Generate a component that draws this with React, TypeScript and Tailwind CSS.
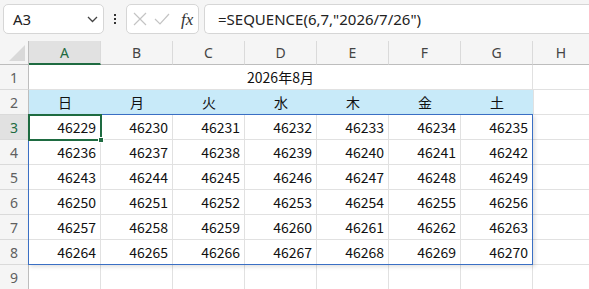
import React from 'react';

const days = ['日', '月', '火', '水', '木', '金', '土'];
const cols = ['A', 'B', 'C', 'D', 'E', 'F', 'G'];
const start = 46229;

const RowHead = ({ n, active }: { n: number; active?: boolean }) => (
  <div
    className={`w-[29px] shrink-0 flex items-center justify-center border-r border-r-[#bdbdbd] border-b border-b-[#dadada] font-['Noto_Sans',sans-serif] text-[14px] ${
      active ? 'bg-[#e1e1e1] text-[#1e6b41]' : 'bg-[#f5f5f5] text-[#5f5f5f]'
    }`}
  >
    {n}
  </div>
);

export default function App() {
  const rows = Array.from({ length: 6 }, (_, r) => Array.from({ length: 7 }, (_, c) => start + r * 7 + c));

  return (
    <div className="w-[589px] h-[289px] overflow-hidden bg-white font-['Noto_Sans','Noto_Sans_CJK_JP',sans-serif] text-black select-none">
      {/* formula bar */}
      <div className="h-[41px] bg-[#f5f5f5] flex items-start pt-[4px] pl-[3px]">
        <div className="w-[101px] h-[30px] bg-white border border-[#d6d6d6] rounded-[5px] flex items-center pl-[9px] pr-[5px]">
          <span className="text-[15px] text-[#222] flex-1">A3</span>
          <svg width="11" height="7" viewBox="0 0 11 7" className="mt-[1px]">
            <path d="M1 1l4.5 4.5L10 1" fill="none" stroke="#444" strokeWidth="1.3" />
          </svg>
        </div>
        <div className="w-[22px] h-[30px] flex flex-col items-center justify-center gap-[2px]">
          <span className="w-[2px] h-[2px] bg-[#333]" />
          <span className="w-[2px] h-[2px] bg-[#333]" />
          <span className="w-[2px] h-[2px] bg-[#333]" />
        </div>
        <div className="w-[73px] h-[30px] bg-white border border-[#d6d6d6] rounded-[5px] flex items-center pl-[6px] gap-[7px]">
          <svg width="14" height="14" viewBox="0 0 14 14">
            <path d="M1 1l12 12M13 1L1 13" stroke="#c4c4c4" strokeWidth="1.2" />
          </svg>
          <svg width="16" height="12" viewBox="0 0 16 12">
            <path d="M1 6l5 5L15 1" fill="none" stroke="#c4c4c4" strokeWidth="1.2" />
          </svg>
          <span className="font-['Liberation_Serif',serif] italic text-[17px] text-[#333] leading-none ml-[4px]">fx</span>
        </div>
        <div className="ml-[5px] flex-1 h-[30px] bg-white border border-[#d6d6d6] border-r-0 rounded-l-[5px] flex items-center pl-[13px]">
          <span className="text-[15px] text-[#222]">=SEQUENCE(6,7,"2026/7/26")</span>
        </div>
      </div>

      {/* column headers */}
      <div className="h-[24px] flex bg-[#f5f5f5]">
        <div className="w-[29px] shrink-0 border-r border-r-[#bdbdbd] border-b border-b-[#bdbdbd] flex items-end justify-end pr-[3px] pb-[3px]">
          <svg width="16" height="16" viewBox="0 0 16 16">
            <polygon points="16,0 16,16 0,16" fill="#d9d9d9" />
          </svg>
        </div>
        {cols.map((c, i) => (
          <div
            key={c}
            className={`w-[72px] shrink-0 flex items-center justify-center text-[14px] border-r border-r-[#dadada] ${
              i === 0
                ? 'bg-[#e1e1e1] text-[#1e6b41] border-b-2 border-b-[#1e6b41]'
                : 'text-[#444] border-b border-b-[#bdbdbd]'
            }`}
          >
            {c}
          </div>
        ))}
        <div className="flex-1 flex items-center justify-center text-[14px] text-[#444] border-b border-b-[#bdbdbd]">H</div>
      </div>

      {/* sheet */}
      <div className="relative font-['Noto_Sans_CJK_JP',sans-serif] text-[14px] text-[#111]">
        <div className="h-[25px] flex">
          <RowHead n={1} />
          <div className="w-[504px] shrink-0 flex items-center justify-center border-r border-b border-[#e1e1e1]">2026年8月</div>
          <div className="flex-1 border-b border-[#e1e1e1]" />
        </div>
        <div className="h-[25px] flex">
          <RowHead n={2} />
          {days.map((d) => (
            <div key={d} className="w-[72px] shrink-0 flex items-center justify-center bg-[#c8eaf9]">
              {d}
            </div>
          ))}
          <div className="flex-1 border-l border-b border-[#e1e1e1]" />
        </div>
        {rows.map((r, ri) => (
          <div key={ri} className="h-[25px] flex">
            <RowHead n={ri + 3} active={ri === 0} />
            {r.map((v) => (
              <div key={v} className="w-[72px] shrink-0 flex items-center justify-end pr-[4px] border-r border-b border-[#e1e1e1]">
                {v}
              </div>
            ))}
            <div className="flex-1 border-b border-[#e1e1e1]" />
          </div>
        ))}
        <div className="h-[25px] flex">
          <RowHead n={9} />
          {cols.map((c) => (
            <div key={c} className="w-[72px] shrink-0 border-r border-b border-[#e1e1e1]" />
          ))}
          <div className="flex-1 border-b border-[#e1e1e1]" />
        </div>

        {/* spill range outline */}
        <div className="absolute left-[28px] top-[49px] w-[505px] h-[151px] border border-[#3a6fc4] shadow-[2px_2px_4px_rgba(0,0,0,0.12)] pointer-events-none" />
        {/* active cell */}
        <div className="absolute left-[28px] top-[49px] w-[74px] h-[27px] border-2 border-[#1e6b41] pointer-events-none">
          <span className="absolute right-[-4px] bottom-[-4px] w-[6px] h-[6px] bg-[#1e6b41] border border-white" />
        </div>
      </div>
    </div>
  );
}
